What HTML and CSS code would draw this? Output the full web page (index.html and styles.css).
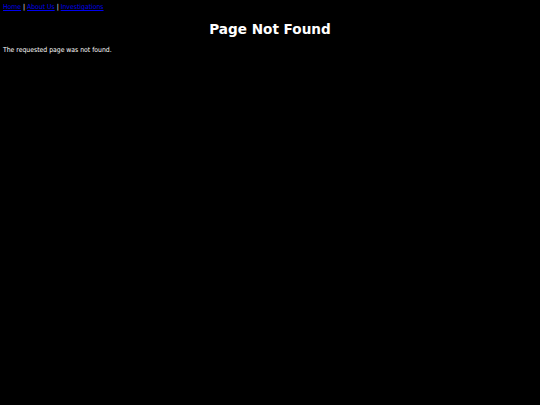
FILE: index.html
```
<!DOCTYPE html>
<html>
<head>
<meta charset="utf-8">
<title>Page Not Found</title>
<link rel="stylesheet" href="styles.css">
</head>
<body>
<div class="nav"><a href="#">Home</a> | <a href="#">About Us</a> | <a href="#">Investigations</a></div>
<h1 class="title">Page Not Found</h1>
<p class="msg">The requested page was not found.</p>
</body>
</html>
```
FILE: styles.css
```
html, body {
  background: #000;
}
body {
  margin: 0;
  padding: 3px;
  color: #fff;
  font-family: "DejaVu Sans Condensed", "DejaVu Sans", sans-serif;
  font-size: 6.8px;
}
.nav {
  line-height: 9px;
}
.nav a {
  color: #0000ee;
}
.title {
  text-align: center;
  font-family: "DejaVu Sans", sans-serif;
  font-size: 13.6px;
  font-weight: bold;
  margin: 9px 0 0;
  line-height: 16px;
}
.msg {
  margin: 9px 0 0;
  line-height: 9px;
}
```
